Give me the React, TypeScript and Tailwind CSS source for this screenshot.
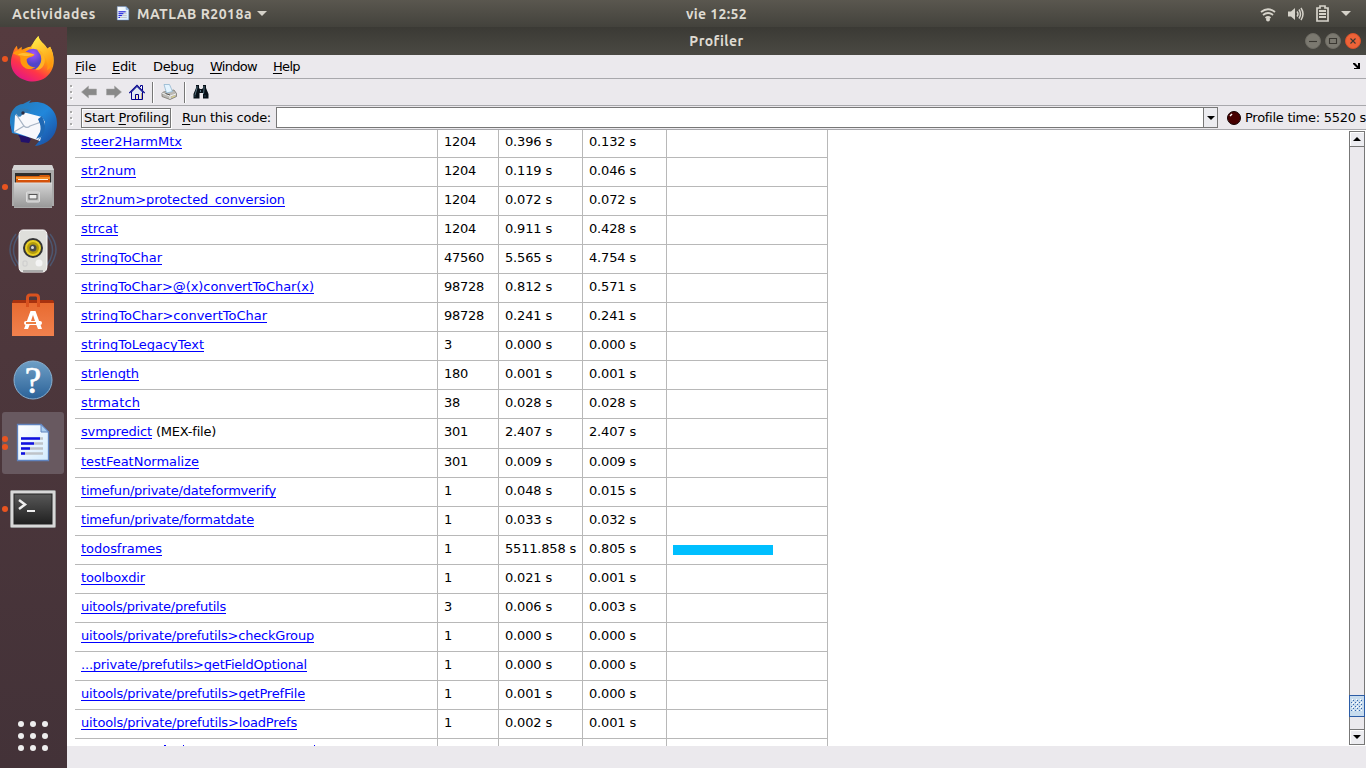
import { useLayoutEffect, useRef, useState, type ReactNode } from 'react';

function Fit({ w, className = '', children }: { w: number; className?: string; children: ReactNode }) {
  const ref = useRef<HTMLSpanElement>(null);
  const [ls, setLs] = useState(0);
  useLayoutEffect(() => {
    const el = ref.current;
    if (!el) return;
    const natural = el.getBoundingClientRect().width;
    const n = (el.textContent || '').length;
    setLs((w - natural) / n);
  }, []);
  return (
    <span ref={ref} style={{ letterSpacing: ls }} className={'inline-block whitespace-pre ' + className}>
      {children}
    </span>
  );
}

type Row = { name: string; w: number; calls: string; cw: number; total: string; self: string; mex?: boolean; bar?: number };
const rows: Row[] = [
  { name: 'steer2HarmMtx', w: 101, calls: '1204', cw: 32, total: '0.396 s', self: '0.132 s' },
  { name: 'str2num', w: 55, calls: '1204', cw: 32, total: '0.119 s', self: '0.046 s' },
  { name: 'str2num>protected_conversion', w: 204, calls: '1204', cw: 32, total: '0.072 s', self: '0.072 s' },
  { name: 'strcat', w: 37, calls: '1204', cw: 32, total: '0.911 s', self: '0.428 s' },
  { name: 'stringToChar', w: 81, calls: '47560', cw: 40, total: '5.565 s', self: '4.754 s' },
  { name: 'stringToChar>@(x)convertToChar(x)', w: 233, calls: '98728', cw: 40, total: '0.812 s', self: '0.571 s' },
  { name: 'stringToChar>convertToChar', w: 186, calls: '98728', cw: 40, total: '0.241 s', self: '0.241 s' },
  { name: 'stringToLegacyText', w: 123, calls: '3', cw: 8, total: '0.000 s', self: '0.000 s' },
  { name: 'strlength', w: 58, calls: '180', cw: 24, total: '0.001 s', self: '0.001 s' },
  { name: 'strmatch', w: 59, calls: '38', cw: 16, total: '0.028 s', self: '0.028 s' },
  { name: 'svmpredict', w: 71, calls: '301', cw: 24, total: '2.407 s', self: '2.407 s', mex: true },
  { name: 'testFeatNormalize', w: 118, calls: '301', cw: 24, total: '0.009 s', self: '0.009 s' },
  { name: 'timefun/private/dateformverify', w: 195, calls: '1', cw: 8, total: '0.048 s', self: '0.015 s' },
  { name: 'timefun/private/formatdate', w: 173, calls: '1', cw: 8, total: '0.033 s', self: '0.032 s' },
  { name: 'todosframes', w: 81, calls: '1', cw: 8, total: '5511.858 s', self: '0.805 s', bar: 100 },
  { name: 'toolboxdir', w: 64, calls: '1', cw: 8, total: '0.021 s', self: '0.001 s' },
  { name: 'uitools/private/prefutils', w: 145, calls: '3', cw: 8, total: '0.006 s', self: '0.003 s' },
  { name: 'uitools/private/prefutils>checkGroup', w: 233, calls: '1', cw: 8, total: '0.000 s', self: '0.000 s' },
  { name: '...private/prefutils>getFieldOptional', w: 226, calls: '1', cw: 8, total: '0.000 s', self: '0.000 s' },
  { name: 'uitools/private/prefutils>getPrefFile', w: 224, calls: '1', cw: 8, total: '0.001 s', self: '0.000 s' },
  { name: 'uitools/private/prefutils>loadPrefs', w: 216, calls: '1', cw: 8, total: '0.002 s', self: '0.001 s' },
];

function TableRow({ r, first }: { r: Row; first: boolean }) {
  const h = first ? 'h-[27px] pt-1' : r.mex ? 'h-[29px] pt-[5px]' : 'h-7 pt-[5px]';
  const cell = 'border-r border-[#b8b8b8] pl-[6px] ' + h;
  return (
    <div className="grid w-[753px] shrink-0 grid-cols-[363px_61px_84px_84px_161px] border-b border-[#b8b8b8] leading-4">
      <div className={cell}>
        <Fit w={r.w} className="h-[15px] border-b border-[#0000ff] text-[#0000ff]">{r.name}</Fit>
        {r.mex && <Fit w={60} className="ml-1">(MEX-file)</Fit>}
      </div>
      <div className={cell}><Fit w={r.cw}>{r.calls}</Fit></div>
      <div className={cell}><Fit w={r.total.length > 7 ? 71 : 47}>{r.total}</Fit></div>
      <div className={cell}><Fit w={47}>{r.self}</Fit></div>
      <div className={cell}>
        {r.bar && <div style={{ width: r.bar }} className="mt-[4px] h-[10px] bg-[#00bfff]" />}
      </div>
    </div>
  );
}

/* Sliver of the next row at the bottom of the scroll view: only the ascender tips show. */
function PartialRow() {
  return (
    <div className="grid h-[7px] w-[753px] shrink-0 grid-cols-[363px_61px_84px_84px_161px]">
      <div className="flex items-end border-r border-[#b8b8b8]">
        <svg className="block h-px w-[300px]" viewBox="0 0 300 1"><path d="M89 0h2v1h-2zM108 0h1v1h-1zM239 0h1v1h-1z" fill="#0000ff" /></svg>
      </div>
      {[0, 1, 2, 3].map(i => <div key={i} className="border-r border-[#b8b8b8]" />)}
    </div>
  );
}

function MatlabDoc({ className }: { className: string }) {
  return (
    <svg className={className} viewBox="0 0 34 40">
      <defs><linearGradient id="doc" x1="0" y1="0" x2="1" y2="1"><stop stopColor="#fff" /><stop offset="1" stopColor="#d3ebff" /></linearGradient></defs>
      <path d="M1.5 1.5H25L32.500 9V37.500H1.500Z" fill="url(#doc)" stroke="#5f82bd" strokeWidth="1.300" />
      <path d="M25 1.500V9H32.500Z" fill="#a9cdf0" stroke="#5f82bd" />
      <path d="M5 15.500H27M5 20.500H27M5 25.500H27M5 30.500H27" stroke="#bfc3c9" strokeWidth="2.600" />
      <path d="M5 15.500H24M5 20.500H18M5 25.500H14M5 30.500H9" stroke="#0f10e4" strokeWidth="2.600" />
    </svg>
  );
}

function Dot() { return <i className="block h-[6px] w-[6px] rounded-full bg-[#e95420]" />; }

function DockItem({ children, dots = 0, active = false, height }: { children: ReactNode; dots?: number; active?: boolean; height: string }) {
  return (
    <div className={'relative flex w-full shrink-0 items-center justify-center pr-[2px] ' + height}>
      {active && <div className="absolute left-[2px] right-[3px] inset-y-0 rounded-[3px] bg-[#685960]" />}
      {dots > 0 && <div className="absolute left-[2px] flex flex-col gap-[2px]">{Array.from({ length: dots }, (_, i) => <Dot key={i} />)}</div>}
      <div className="relative">{children}</div>
    </div>
  );
}

function Firefox() {
  return (
    <svg className="mb-[2px] block h-[47px] w-[47px]" viewBox="0 0 48 48">
      <defs>
        <linearGradient id="ff1" x1=".8" y1=".1" x2=".3" y2="1"><stop stopColor="#fff44f" /><stop offset=".4" stopColor="#ff980e" /><stop offset=".7" stopColor="#ff3647" /><stop offset="1" stopColor="#e31587" /></linearGradient>
        <radialGradient id="ff2" cx=".5" cy=".25"><stop stopColor="#a454ff" /><stop offset="1" stopColor="#5144c9" /></radialGradient>
        <linearGradient id="ff3" x1="0" y1="0" x2=".4" y2="1"><stop stopColor="#fff44f" /><stop offset="1" stopColor="#ff980e" /></linearGradient>
      </defs>
      <path d="M4 18C5 15 6 13 8 11L9 15L13 12L13 15C17 14 19 12 22 12L30 1C31 7 37 9 39 14L42 12C49 25 46 39 35 45C21 52 2 43 2 28C2 24 3 21 4 18Z" fill="url(#ff1)" />
      <path d="M30 1C31 7 37 9 39 14L42 12C47 21 46 31 39 36C41 26 37 20 29 17L23 14C24 8 27 4 30 1Z" fill="url(#ff3)" />
      <circle cx="24.500" cy="24.500" r="10.500" fill="url(#ff2)" />
      <path d="M4 19C7 15 12 15 17 17C22 18 24 19 26 20C25 23 20 22 18 25C18 30 22 33 27 33C21 37 14 34 12 28C11 25 13 22 9 21Z" fill="#ff980e" />
      <path d="M28 14C37 17 39 27 34 33C31 36 29 36 27 35C33 31 34 25 32 20Z" fill="#ffb325" />
      <path d="M9 20C15 17 20 19 26 20C21 22 15 22 9 20Z" fill="#ffbd35" />
    </svg>
  );
}

function Thunderbird() {
  return (
    <svg className="block h-12 w-12" viewBox="0 0 48 48">
      <defs><linearGradient id="tb" x1="0" y1="0" x2="1" y2="1"><stop stopColor="#2879b2" /><stop offset=".5" stopColor="#2187db" /><stop offset="1" stopColor="#184498" /></linearGradient></defs>
      <path d="M1 27L3 33L7 32L11 39L12 43L20 44L22 40Z" fill="#22116b" />
      <path d="M1 24C0 11 8 5 14 5L22 1L20 4C35 0 48 10 48 24C48 37 38 46 26 47L31 41L3 34Z" fill="url(#tb)" />
      <path d="M6 16L10 18L14 13L33 18L36 23L31 42L5 33Z" fill="#f7f8fc" />
      <path d="M7 15L15 27Q18 30 21 27L35 22M15 27L5 33" fill="none" stroke="#a6b3c4" strokeWidth="1.200" />
      <path d="M33 17C38 27 37 35 28 42L31 38L27 40L31 33Q33 28 29 20Z" fill="#1f68b4" />
      <path d="M7 13C10 9 17 8 22 12L15 14L11 18Z" fill="#317bb4" />
      <circle cx="14" cy="14" r="1.700" fill="#292c42" />
    </svg>
  );
}

function Files() {
  return (
    <svg className="block h-11 w-[42px]" viewBox="0 0 42 44">
      <defs><linearGradient id="cab" y2="1" x2="0"><stop stopColor="#d4d4d4" /><stop offset="1" stopColor="#999" /></linearGradient></defs>
      <path d="M2 0H40L42 5V41H40V43H2V41H0V5Z" fill="#aaa" /><path d="M2 0H40L42 5H0Z" fill="#d4d4d4" />
      <rect x="3" y="8" width="36" height="11" fill="#2e2d2b" />
      <path d="M4 11L27 11L28 10H37L38 11V18H4Z" fill="#d35b0c" /><path d="M4 12H38V14H4Z" fill="#f68e26" /><path d="M5 14H37V18H5Z" fill="#d4510a" /><path d="M6 14.500H36" stroke="#fff2df" strokeWidth="1" />
      <rect x="2" y="18" width="38" height="24" fill="url(#cab)" /><path d="M2 18H40" stroke="#e0e0e0" />
      <rect x="14.500" y="27" width="13" height="10" rx="1" fill="#c5c5c5" stroke="#ddd" /><rect x="17" y="29.500" width="8" height="4.500" fill="#eee" stroke="#555" />
    </svg>
  );
}

function Speaker() {
  return (
    <svg className="block h-12 w-12" viewBox="0 0 48 48">
      <g fill="none" stroke="#4d566f" strokeWidth="1.500"><path d="M7 7Q-5 22 7 39M10 8Q-1 23 10 38M41 7Q53 22 41 39M38 8Q49 23 38 38" /></g>
      <path d="M14 3H34Q38 3 38 9V38Q38 45 34 45H14Q10 45 10 39V9Q10 3 14 3Z" fill="#dfdfdb" stroke="#fff" /><path d="M14 44H34" stroke="#aaa" strokeWidth="2" />
      <circle cx="24" cy="21" r="10" fill="#353535" /><circle cx="24" cy="21" r="7" fill="#b39b0d" stroke="#e8ce23" strokeWidth="2" /><circle cx="24" cy="21" r="3.500" fill="#4a4a4a" /><circle cx="23.500" cy="20.500" r="1.500" fill="#ddd" /><circle cx="30" cy="36" r="3.500" fill="#f4f4f4" /><rect x="14" y="34" width="4" height="5" rx="1" fill="none" stroke="#ccc" />
    </svg>
  );
}

function Store() {
  return (
    <svg className="block h-11 w-[42px]" viewBox="0 0 42 44">
      <defs><linearGradient id="bag" y2="1" x2="0"><stop stopColor="#e86b31" /><stop offset="1" stopColor="#f1814e" /></linearGradient></defs>
      <path d="M1 7H41L42 9V43H0V10Z" fill="#a8320f" /><path d="M0 10H42V43H0Z" fill="url(#bag)" />
      <path d="M15.500 14V5Q15.500 2 18 2H24Q26.500 2 26.500 5V14" fill="none" stroke="#d9521f" strokeWidth="3" />
      <path d="M12 36L18.500 18H23.500L30 36H26L24 31H18L16 36ZM19 28H23L21 22Z" fill="#fff" fillRule="evenodd" /><rect x="12" y="28" width="18" height="4" rx="2" fill="#fff" /><path d="M14 30H24" stroke="#e86116" strokeWidth="1.600" />
    </svg>
  );
}

function Terminal() {
  return (
    <svg className="block h-[38px] w-[46px]" viewBox="0 0 46 38">
      <defs><linearGradient id="ter" x2="0" y2="1"><stop stopColor="#585858" /><stop offset="1" stopColor="#202020" /></linearGradient></defs>
      <rect x=".5" y=".5" width="45" height="37" rx="1" fill="#d8d8d8" stroke="#999" /><rect x="4" y="4" width="38" height="30" fill="url(#ter)" stroke="#222" />
      <path d="M9 10L15 14.500L9 19" fill="none" stroke="#eee" strokeWidth="2.500" /><path d="M17 21H25" stroke="#eee" strokeWidth="2" />
    </svg>
  );
}

function Grip() {
  return <div className="flex w-[6px] flex-col gap-1 pl-[3px]">{[0, 1, 2].map(i => <i key={i} className="block h-[2px] w-[2px] bg-[#aaa] shadow-[1px_1px_0_#fff]" />)}</div>;
}

function Arrow({ className = '' }: { className?: string }) {
  return <svg className={'block h-4 w-4 ' + className} viewBox="0 0 16 16"><path d="M.5 8L7.500 2V5H15.500V11H7.500V14Z" fill="#898989" stroke="#a5a5a5" strokeWidth=".5" /></svg>;
}

function Toolbar() {
  return (
    <div className="flex h-[27px] shrink-0 items-center border-b border-[#a8a8ac] pr-2">
      <Grip />
      <Arrow className="ml-2" /><Arrow className="ml-[9px] rotate-180" />
      <svg className="ml-[7px] block h-4 w-4" viewBox="0 0 16 16">
        <path d="M2.500 8V15.500H13.500V8L8 2.500Z" fill="#dfeaf4" stroke="#00008b" /><path d="M.3 9L8 1.300L15.700 9" fill="none" stroke="#00008b" strokeWidth="1.200" /><path d="M11.500 3V1.500H13.500V6" fill="#fff" stroke="#00008b" /><path d="M6.500 15V10.500H9.500V15" fill="#f5e4c0" stroke="#00008b" /><path d="M12.500 9V15" stroke="#c9ab85" />
      </svg>
      <i className="ml-[7px] block h-[21px] w-[2px] border-l border-[#777] bg-white" />
      <svg className="ml-[7px] block h-4 w-4" viewBox="0 0 16 16">
        <path d="M2.500 8L13 6L15.500 9.500V12.500L9 15.500L1 12.500V9Z" fill="#bbb9b4" stroke="#77756e" strokeWidth=".8" /><path d="M1 9L9 12L15 10M9 12V15" stroke="#eee" fill="none" /><path d="M3 .5H8.500L11.500 7.500L5.500 9Z" fill="#e4f4ff" stroke="#91b5cf" strokeWidth=".8" /><path d="M4.500 9.500L9 11" stroke="#555" /><path d="M10.500 13.500L14 12" stroke="#dfd37d" />
      </svg>
      <i className="ml-[7px] block h-[21px] w-[2px] border-l border-[#777] bg-white" />
      <svg className="ml-[7px] block h-4 w-4" viewBox="0 0 16 16">
        <path d="M3 1H6V4L7 5H9L10 4V1H13V4L15.500 10V14.500H10V9H6.500V14.500H.5V10L3 4Z" fill="#071018" /><path d="M4 2V4L2 11M11 2V5L10.500 10M7.500 6V8" stroke="#57737f" /><path d="M2 11V13M12 11V13" stroke="#284555" />
      </svg>
    </div>
  );
}

function Scrollbar() {
  const btn = 'flex h-4 w-4 shrink-0 items-center justify-center border border-[#777] bg-[#ececf0] shadow-[inset_1px_1px_0_#fff]';
  return (
    <div className="flex w-[17px] shrink-0 flex-col pt-px">
      <div className={btn}><svg className="h-1 w-2" viewBox="0 0 8 4"><path d="M4 0L8 4H0Z" /></svg></div>
      <div className="w-4 flex-1 border-x border-x-[#777] bg-[#ebe9ed]" />
      <div className="h-[22px] w-4 shrink-0 border border-[#2c5ca5] bg-[#c8dcee] p-px">
        <svg className="block h-[18px] w-3" viewBox="0 0 12 18">
          {[4, 8, 12].map(y => [3, 7, 11].map(x => <path key={`${x}-${y}`} d={`M${x - 1} ${y - 1}h1v1h-1zM${x - 3} ${y + 1}h1v1h-1z`} fill="#3868ae" />))}
          {[4, 8, 12].map(y => [3, 7, 11].map(x => <path key={`${x}-${y}`} d={`M${x - 2} ${y - 2}h1v1h-1zM${x - 1} ${y + 1}h1v1h-1z`} fill="#fff" />))}
        </svg>
      </div>
      <div className="h-3 w-4 shrink-0 border-x border-x-[#777] bg-[#ebe9ed]" />
      <div className={btn}><svg className="h-1 w-2" viewBox="0 0 8 4"><path d="M0 0H8L4 4Z" /></svg></div>
      <div className="h-px shrink-0" />
    </div>
  );
}

export default function App() {
  return (
    <div className="flex h-[768px] w-[1366px] flex-col overflow-hidden bg-[#ebe9ed] font-['DejaVu_Sans','sans-serif'] text-[13px] text-black">
      <header className="flex h-[27px] shrink-0 items-center bg-linear-to-b from-[#5a574f] to-[#43423c] font-['Ubuntu','Noto_Sans','sans-serif'] text-sm font-bold text-[#dfdbd2]">
        <div className="flex w-[686px] shrink-0 items-center pl-3">
          <Fit w={84}>Actividades</Fit>
          <MatlabDoc className="ml-[20px] h-[15px] w-[14px]" />
          <Fit w={115} className="ml-[7px]">MATLAB R2018a</Fit>
          <svg className="ml-[5px] h-[5px] w-[10px]" viewBox="0 0 10 5"><path d="M0 0H10L5 5Z" fill="#d5d2c9" /></svg>
        </div>
        <Fit w={61}>vie 12:52</Fit>
        <div className="flex flex-1 items-center justify-end pr-[15px]">
          <svg className="mr-[12px] h-4 w-4" viewBox="0 0 16 16"><path d="M1 6Q8 .5 15 6M3 9Q8 5 13 9M5.500 12Q8 10 10.500 12" fill="none" stroke="#d6d3ca" strokeWidth="1.900" /><circle cx="8" cy="13.500" r="2" fill="#d6d3ca" /></svg>
          <svg className="mr-[12px] h-4 w-4" viewBox="0 0 16 16"><path d="M0 5.500H3L7 2V14L3 10.500H0Z" fill="#d6d3ca" /><path d="M9 5.500Q11 8 9 10.500M11 3.500Q14 8 11 12.500M13 2Q17 8 13 14" fill="none" stroke="#d6d3ca" strokeWidth="1.500" /></svg>
          <svg className="mr-[12px] h-[17px] w-[13px]" viewBox="0 0 13 17"><path d="M4 3V1H9V3H12V16H1V3Z" fill="none" stroke="#d6d3ca" strokeWidth="1.700" /><path d="M3 6H10M3 9H10M3 12H10" stroke="#d6d3ca" strokeWidth="1.800" /></svg>
          <svg className="h-[5px] w-[10px]" viewBox="0 0 10 5"><path d="M0 0H10L5 5Z" fill="#d5d2c9" /></svg>
        </div>
      </header>
      <div className="flex min-h-0 flex-1">
        <aside className="flex w-[67px] shrink-0 flex-col bg-linear-to-b from-[#553b3f] to-[#433238]">
          <DockItem height="h-[64px]" dots={1}><Firefox /></DockItem>
          <DockItem height="h-[64px]"><Thunderbird /></DockItem>
          <DockItem height="h-[64px]" dots={1}><Files /></DockItem>
          <DockItem height="h-[64px]"><Speaker /></DockItem>
          <DockItem height="h-[64px]"><Store /></DockItem>
          <DockItem height="h-[65px]"><svg className="block h-10 w-10" viewBox="0 0 40 40"><defs><linearGradient id="help" x2="0" y2="1"><stop stopColor="#6f9fc6" /><stop offset="1" stopColor="#2b6298" /></linearGradient></defs><circle cx="20" cy="20" r="19" fill="url(#help)" stroke="#8ab1d1" /><text x="20" y="33" textAnchor="middle" fontFamily="Liberation Serif" fontSize="37" fill="#fff" stroke="#fff" strokeWidth=".7">?</text></svg></DockItem>
          <DockItem height="h-[62px]" active dots={2}><MatlabDoc className="block h-10 w-[34px]" /></DockItem>
          <DockItem height="h-[70px]" dots={1}><Terminal /></DockItem>
          <div className="mt-auto mb-[17px] ml-[18px] grid w-[30px] grid-cols-3 gap-[6px]">{Array.from({ length: 9 }, (_, i) => <i key={i} className="h-[6px] w-[6px] rounded-full bg-[#eee]" />)}</div>
        </aside>
        <main className="flex min-w-0 flex-1 flex-col">
          <div className="relative flex h-7 shrink-0 items-center justify-center bg-linear-to-b from-[#3b3a35] to-[#4a4943] font-['Ubuntu','Noto_Sans','sans-serif'] text-sm font-bold text-[#dfdbd2]">
            <Fit w={54} className="-mt-px">Profiler</Fit>
            <div className="absolute right-[5px] top-[6px] flex gap-1">
              {['M4 8.500H12', 'M4.500 5.500H11.500V10.500H4.500Z', 'M5.500 5.500L10.500 10.500M10.500 5.500L5.500 10.500'].map((d, i) => <svg key={d} className="h-4 w-4" viewBox="0 0 16 16"><circle cx="8" cy="8" r="7.500" fill={i === 2 ? '#ed6338' : '#7b7970'} stroke={i === 2 ? '#d8512b' : '#6e6c64'} /><path d={d} fill="none" stroke="#3a3832" strokeWidth="1.100" /></svg>)}
            </div>
          </div>
          <nav className="flex h-6 shrink-0 items-center border-b border-[#a8a8ac] pl-2">
            {([['', 'F', 'ile', 21, 'mr-4'], ['', 'E', 'dit', 24, 'mr-[17px]'], ['De', 'b', 'ug', 41, 'mr-4'], ['', 'W', 'indow', 47, 'mr-4'], ['', 'H', 'elp', 27, '']] as const).map(([a, b, c, w, m]) => <Fit key={b} w={w} className={m}>{a}<u className="underline-offset-2">{b}</u>{c}</Fit>)}
            <svg className="ml-auto mr-[5px] h-[7px] w-2" viewBox="0 0 8 7"><path d="M0 0H2L5 3V0H7V6H1V5H4L0 1Z" fill="#000" /></svg>
          </nav>
          <Toolbar />
          <div className="flex h-6 shrink-0 items-center border-b border-[#a8a8ac]">
            <Grip />
            <button className="ml-2 flex h-5 w-[90px] shrink-0 items-center border border-[#777] pl-[2px] pt-px shadow-[inset_1px_1px_0_#fff,1px_1px_0_#fff]"><Fit w={85}>Start <u className="underline-offset-2">P</u>rofiling</Fit></button>
            <Fit w={89} className="ml-[11px] shrink-0 pt-px"><u className="underline-offset-2">R</u>un this code:</Fit>
            <div className="ml-[5px] flex h-[21px] w-[942px] shrink-0 border border-[#777] bg-white"><i className="ml-auto flex w-[14px] items-center justify-center border-l border-[#777] bg-[#ececf0]"><svg className="h-1 w-2" viewBox="0 0 8 4"><path d="M0 0H8L4 4Z" /></svg></i></div>
            <svg className="ml-[9px] h-[14px] w-[14px] shrink-0" viewBox="0 0 14 14"><circle cx="7" cy="7" r="6.500" fill="#470000" stroke="#140000" /><path d="M3 5L5 3" stroke="#fff" strokeWidth="1.500" /></svg>
            <Fit w={121} className="ml-1 shrink-0 pt-px">Profile time: 5520 s</Fit>
          </div>
          <section className="flex h-[616px] shrink-0 bg-white">
            <div className="flex min-w-0 flex-1 flex-col overflow-hidden pl-2">
              {rows.map((r, i) => <TableRow key={r.name} r={r} first={i === 0} />)}
              <PartialRow />
            </div>
            <Scrollbar />
          </section>
        </main>
      </div>
    </div>
  );
}
